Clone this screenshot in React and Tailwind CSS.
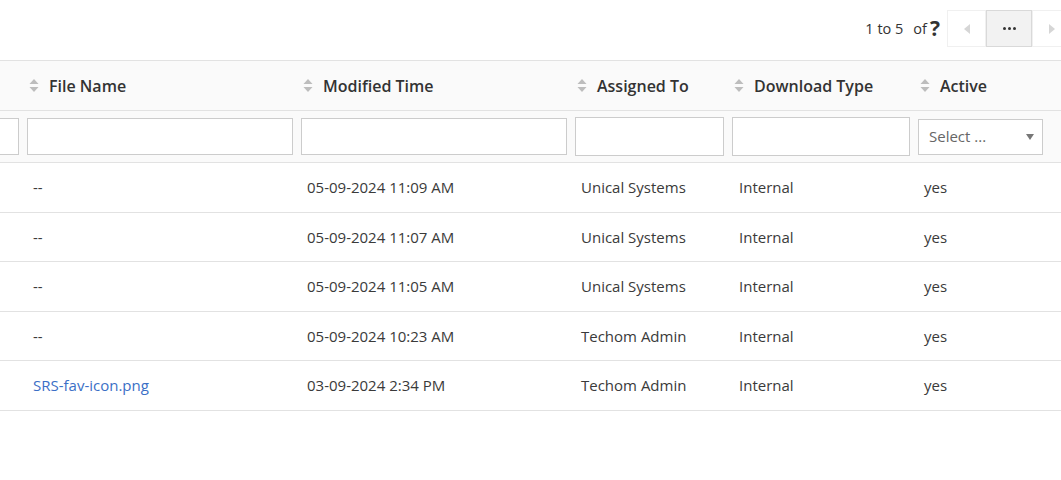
import React from 'react';

const rows = [
  { file: '--', time: '05-09-2024 11:09 AM', who: 'Unical Systems', type: 'Internal', active: 'yes' },
  { file: '--', time: '05-09-2024 11:07 AM', who: 'Unical Systems', type: 'Internal', active: 'yes' },
  { file: '--', time: '05-09-2024 11:05 AM', who: 'Unical Systems', type: 'Internal', active: 'yes' },
  { file: '--', time: '05-09-2024 10:23 AM', who: 'Techom Admin', type: 'Internal', active: 'yes' },
  { file: 'SRS-fav-icon.png', time: '03-09-2024 2:34 PM', who: 'Techom Admin', type: 'Internal', active: 'yes', link: true },
];

const cols = 'grid grid-cols-[23px_274px_274px_157px_186px_147px]';

function SortIcon() {
  return (
    <svg width="10" height="15" viewBox="0 0 10 15" className="shrink-0">
      <path d="M5 1 L9.5 6 H0.5 Z" fill="#bdbdbd" />
      <path d="M5 14 L9.5 9 H0.5 Z" fill="#bdbdbd" />
    </svg>
  );
}

function Head({ label }) {
  return (
    <div className="flex items-center pl-[6px] gap-[10px]">
      <SortIcon />
      <span className="text-[16px] font-semibold text-[#333]">{label}</span>
    </div>
  );
}

export default function App() {
  return (
    <div className="w-[1061px] h-[480px] bg-white overflow-hidden" style={{ fontFamily: '"Open Sans", sans-serif' }}>
      <div className="h-[60px] flex items-start justify-end pt-[10px] -mr-[11px]">
        <div className="flex items-center h-[37px] text-[14.5px] text-[#333] mr-[7px]">
          <span>1 to 5</span>
          <span className="ml-[10px]">of</span>
          <span className="ml-[3px] text-[21px] font-bold leading-none">?</span>
        </div>
        <div className="flex h-[37px] shrink-0">
          <div className="w-[39px] border border-[#f0f0f0] flex items-center justify-center">
            <svg width="6" height="10" viewBox="0 0 6 10"><path d="M6 0 L0 5 L6 10 Z" fill="#d6d6d6" /></svg>
          </div>
          <div className="w-[46px] border border-[#d9d9d9] bg-[#f2f2f2] flex items-center justify-center gap-[2px]">
            <span className="w-[3px] h-[3px] rounded-full bg-[#333]" />
            <span className="w-[3px] h-[3px] rounded-full bg-[#333]" />
            <span className="w-[3px] h-[3px] rounded-full bg-[#333]" />
          </div>
          <div className="w-[40px] border border-[#f0f0f0] flex items-center justify-center">
            <svg width="6" height="10" viewBox="0 0 6 10"><path d="M0 0 L6 5 L0 10 Z" fill="#d6d6d6" /></svg>
          </div>
        </div>
      </div>

      <div className="border-t border-[#e2e2e2]">
        <div className={`${cols} h-[50px] bg-[#fafafa] border-b border-[#e2e2e2]`}>
          <div />
          <Head label="File Name" />
          <Head label="Modified Time" />
          <Head label="Assigned To" />
          <Head label="Download Type" />
          <Head label="Active" />
        </div>

        <div className={`${cols} h-[52px] bg-[#fafafa] border-b border-[#e2e2e2] items-center`}>
          <div className="overflow-hidden flex justify-end pr-[4px]">
            <div className="w-[40px] h-[37px] border border-[#cccccc] bg-white shrink-0" />
          </div>
          <div className="px-[4px]"><div className="h-[37px] border border-[#cccccc] bg-white" /></div>
          <div className="px-[4px]"><div className="h-[37px] border border-[#cccccc] bg-white" /></div>
          <div className="px-[4px]"><div className="h-[39px] border border-[#cccccc] bg-white" /></div>
          <div className="px-[4px]"><div className="h-[39px] border border-[#cccccc] bg-white" /></div>
          <div className="pl-[4px] pr-[18px]">
            <div className="h-[36px] border border-[#cccccc] bg-white flex items-center justify-between pl-[10px] pr-[8px]">
              <span className="text-[15px] text-[#666]">Select ...</span>
              <svg width="8" height="6" viewBox="0 0 8 6"><path d="M0 0 H8 L4 6 Z" fill="#777" /></svg>
            </div>
          </div>
        </div>

        {rows.map((r, i) => (
          <div key={i} className={`${cols} h-[49.6px] border-b border-[#e2e2e2] items-center text-[15px] text-[#3a3a3a]`}>
            <div />
            <div className={`pl-[10px] ${r.link ? 'text-[#3b6fc6]' : ''}`}>{r.file}</div>
            <div className="pl-[10px]">{r.time}</div>
            <div className="pl-[10px]">{r.who}</div>
            <div className="pl-[11px]">{r.type}</div>
            <div className="pl-[10px]">{r.active}</div>
          </div>
        ))}
      </div>
    </div>
  );
}
